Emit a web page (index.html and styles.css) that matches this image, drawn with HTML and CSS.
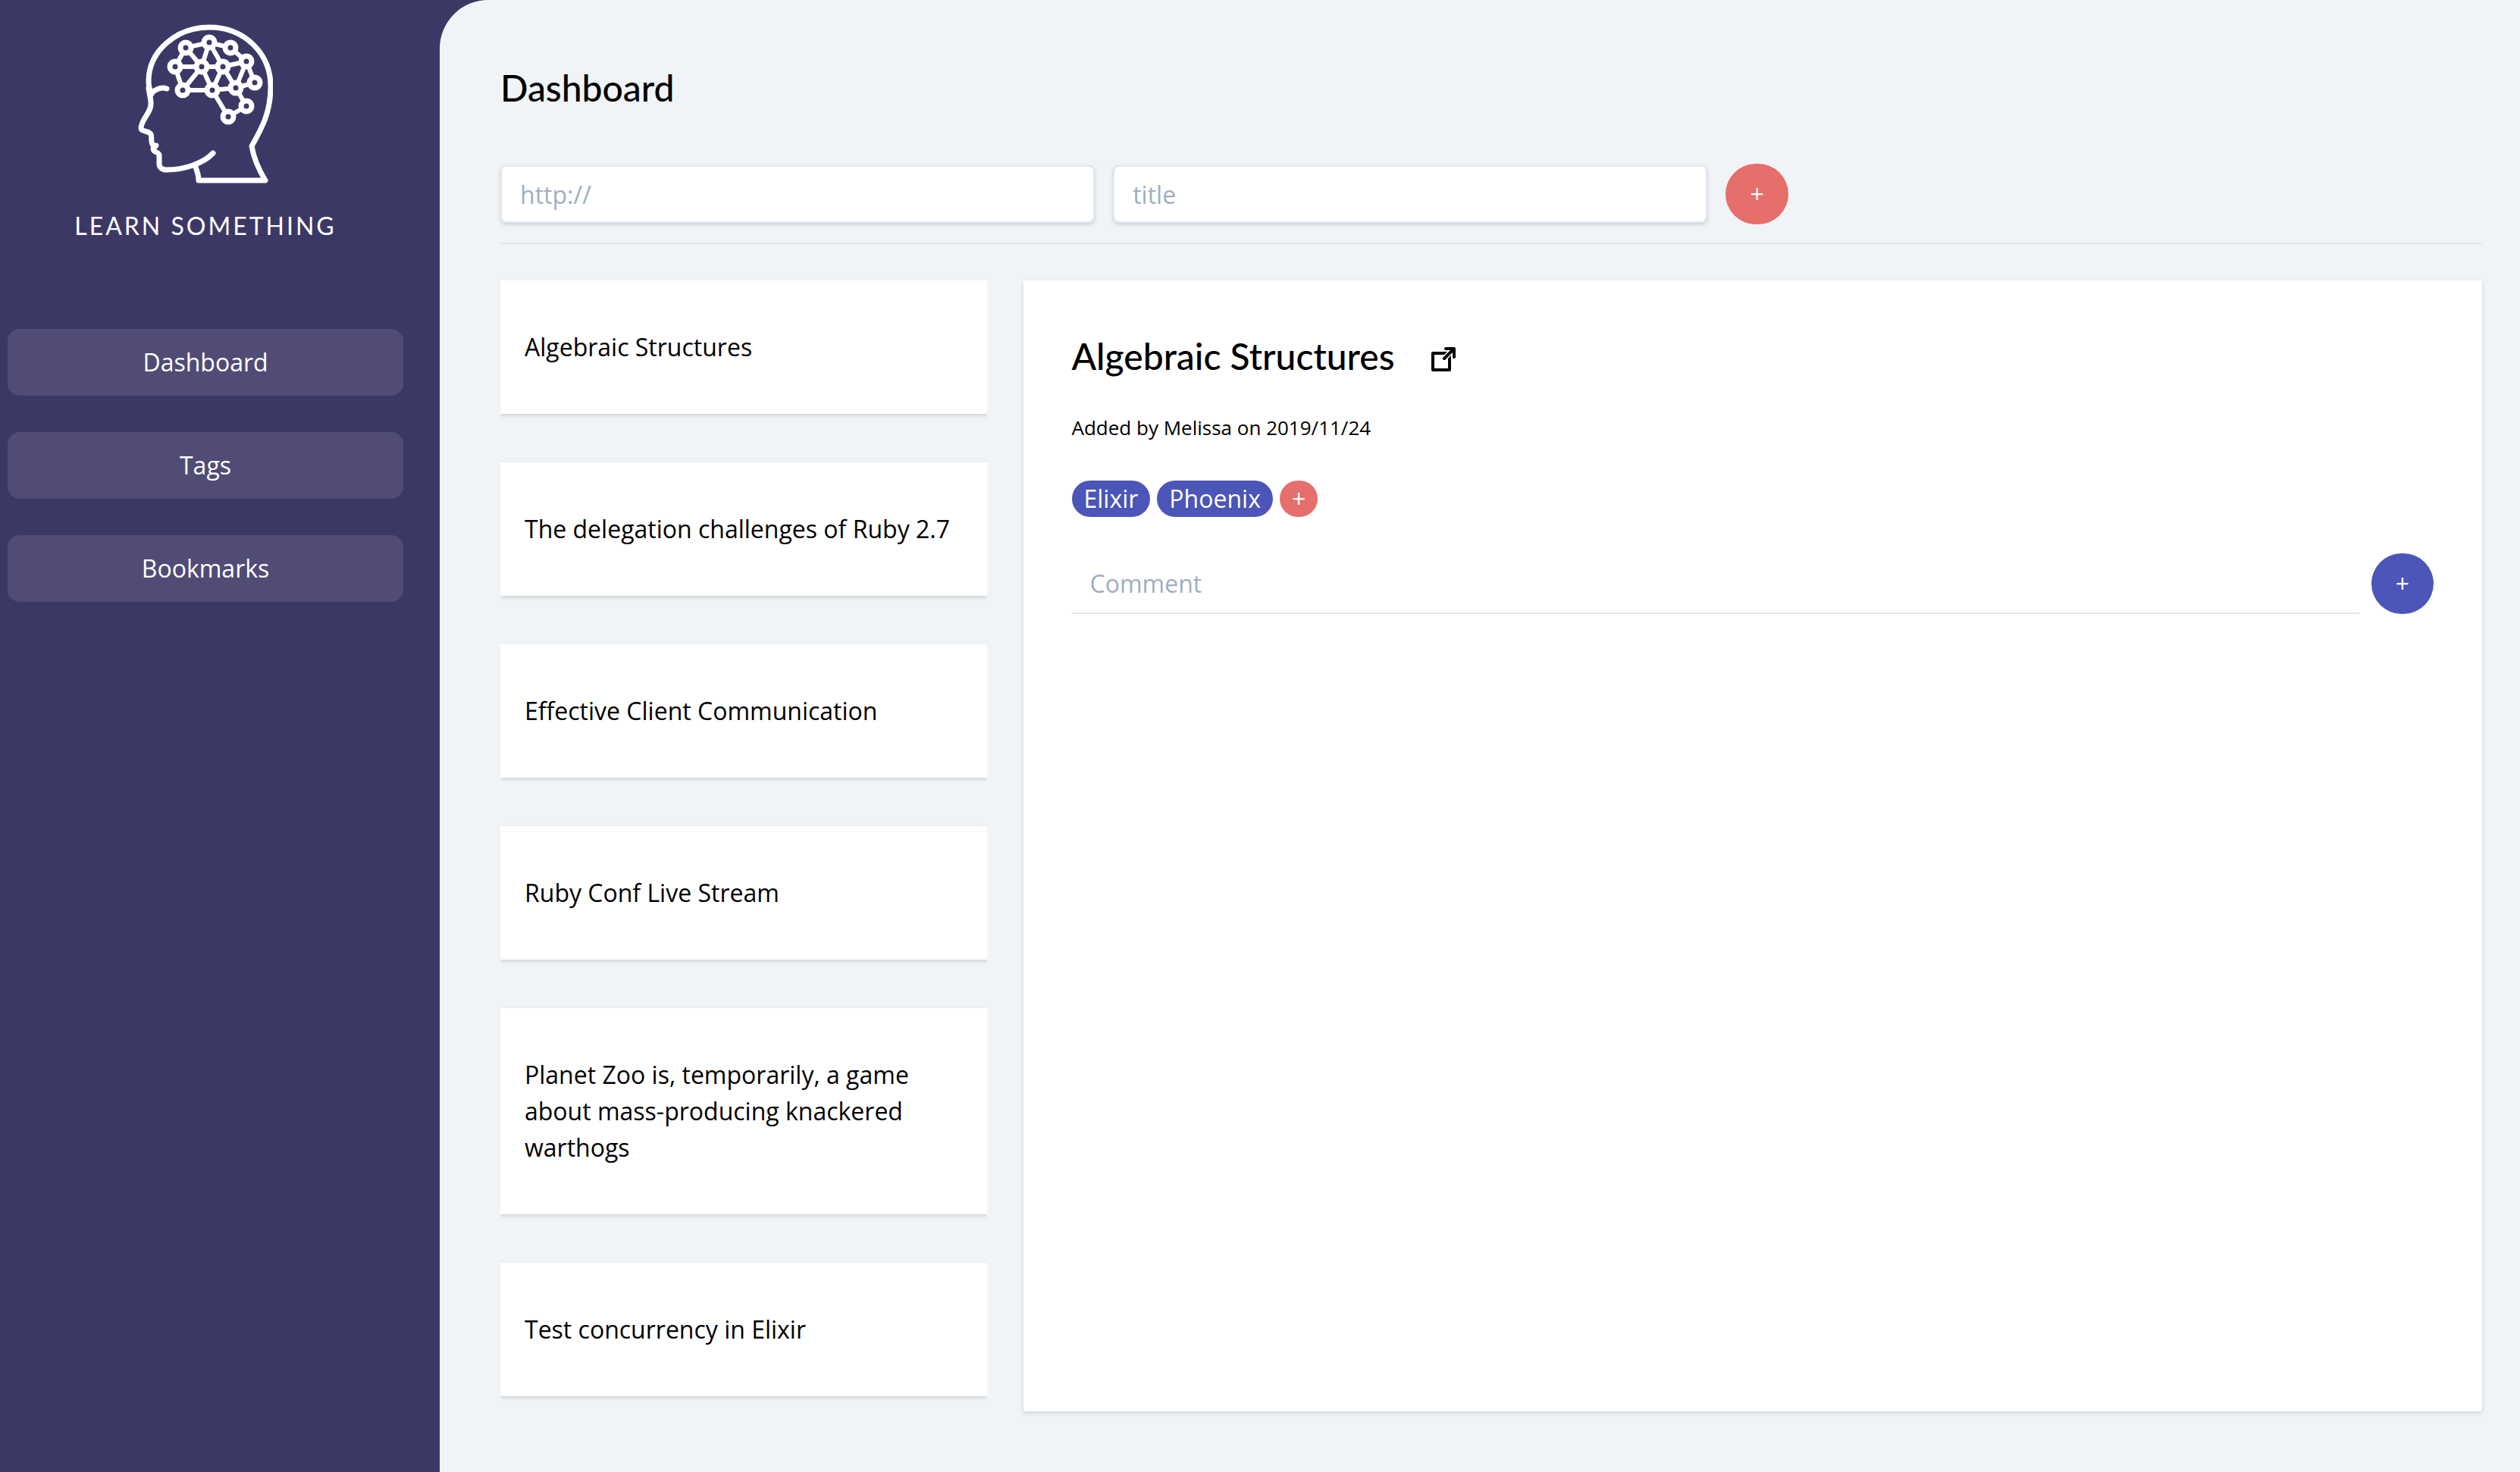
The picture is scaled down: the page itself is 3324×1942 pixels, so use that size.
FILE: index.html
```html
<!DOCTYPE html>
<html lang="en">
<head>
<meta charset="utf-8">
<title>Learn Something</title>
<link rel="stylesheet" href="styles.css">
</head>
<body>
<div class="app">
  <aside class="sidebar">
    <svg class="logo" viewBox="0 0 178 210" fill="none" stroke="#fff" stroke-width="7" stroke-linejoin="round" stroke-linecap="round" aria-hidden="true">
      <path d="M18 92C15 86 14 81 14 75C14 36 50 4 94 4C141 4 175 39 175 82C175 116 164 136 150 161C153 178 160 193 168 206H80C80 200 78 193 75 186"/>
      <path d="M14 84C15 92 17 98 17 104C18 116 4 126 4 137C4 142 14 140 17 145C19 149 16 156 20 160H24L20 164C20 170 29 168 28 174V184C28 189 32 192 38 192C60 192 86 184 99 170"/>
      <path d="M16 92C23 86 30 82 38 85"/>
      <g stroke-width="6">
        <path d="M63 31L94 24L122 31L143 49L154 77L129 84L112 56L94 24L84 56L63 31L49 56L59 87H98L129 84L143 108L119 122L98 87L112 56L143 49L129 84M49 56H112M84 56L59 87M84 56L98 87"/>
      </g>
      <g fill="#3c3866">
        <circle cx="63" cy="31" r="7"/><circle cx="94" cy="24" r="7"/><circle cx="122" cy="31" r="7"/>
        <circle cx="143" cy="49" r="7"/><circle cx="154" cy="77" r="7"/><circle cx="129" cy="84" r="7"/>
        <circle cx="49" cy="56" r="7"/><circle cx="84" cy="56" r="7"/><circle cx="112" cy="56" r="7"/>
        <circle cx="59" cy="87" r="7"/><circle cx="98" cy="87" r="7"/><circle cx="143" cy="108" r="7"/><circle cx="119" cy="122" r="7"/>
      </g>
    </svg>
    <p class="brand">LEARN SOMETHING</p>
    <nav class="nav">
      <a class="nav-link" href="#dashboard">Dashboard</a>
      <a class="nav-link" href="#tags">Tags</a>
      <a class="nav-link" href="#bookmarks">Bookmarks</a>
    </nav>
  </aside>
  <main class="main">
    <h1 class="heading">Dashboard</h1>
    <form class="add-form">
      <input class="field" type="text" placeholder="http://" aria-label="URL">
      <input class="field" type="text" placeholder="title" aria-label="Title">
      <button class="round-button accent" type="button" aria-label="Add bookmark">+</button>
    </form>
    <div class="content">
      <div class="list">
        <a class="card" href="#1">Algebraic Structures</a>
        <a class="card" href="#2">The delegation challenges of Ruby 2.7</a>
        <a class="card" href="#3">Effective Client Communication</a>
        <a class="card" href="#4">Ruby Conf Live Stream</a>
        <a class="card" href="#5">Planet Zoo is, temporarily, a game about mass-producing knackered warthogs</a>
        <a class="card" href="#6">Test concurrency in Elixir</a>
      </div>
      <section class="panel">
        <div class="panel-title">
          <h2 class="heading">Algebraic Structures</h2>
          <a class="open-link" href="#open" aria-label="Open link">
            <svg viewBox="0 0 32 32" width="32" height="32" fill="none" stroke="#000" stroke-width="4" stroke-linejoin="round" aria-hidden="true">
              <path d="M2 8H24V30H2Z"/>
              <path d="M30 2L14 18" stroke="#fff" stroke-width="7"/>
              <path d="M19 2H30V13M30 2L17 15" stroke-linecap="round"/>
              <path d="M24 2H30V8Z" fill="#000" stroke="none"/>
            </svg>
          </a>
        </div>
        <p class="meta">Added by Melissa on 2019/11/24</p>
        <div class="tags">
          <span class="tag">Elixir</span>
          <span class="tag">Phoenix</span>
          <button class="tag accent" type="button" aria-label="Add tag">+</button>
        </div>
        <form class="comment-form">
          <input class="comment" type="text" placeholder="Comment" aria-label="Comment">
          <button class="round-button" type="button" aria-label="Add comment">+</button>
        </form>
      </section>
    </div>
  </main>
</div>
</body>
</html>
```
FILE: styles.css
```css
* { box-sizing: border-box; margin: 0; }

body {
  font: 32px/48px "Open Sans", sans-serif;
  color: #000;
  background: #3c3866;
}

a { color: inherit; text-decoration: none; }

button, input { font: inherit; }

.app { display: flex; min-height: 100vh; }

.sidebar {
  flex: none;
  width: 580px;
  padding: 32px 48px 32px 10px;
  display: flex;
  flex-direction: column;
  align-items: center;
  color: #fff;
}

.logo { width: 178px; height: 210px; }

.brand {
  margin-top: 32px;
  font-family: Lato, sans-serif;
  letter-spacing: 3px;
}

.nav {
  align-self: stretch;
  margin-top: 112px;
  display: grid;
  gap: 48px;
}

.nav-link {
  padding: 20px;
  border-radius: 16px;
  background: #504c75;
  text-align: center;
}

.main {
  flex: 1;
  min-width: 0;
  padding: 80px 50px 80px 80px;
  display: flex;
  flex-direction: column;
  border-top-left-radius: 64px;
  background: #f0f4f7;
}

.heading {
  font: 500 48px/72px Lato, sans-serif;
}

.add-form {
  margin-top: 64px;
  padding-bottom: 24px;
  border-bottom: 2px solid #e2e8f0;
  display: flex;
  align-items: center;
  gap: 24px;
}

.field {
  flex: 0 0 30%;
  padding: 12px 24px;
  border: 2px solid #e2e8f0;
  border-radius: 8px;
  background: #fff;
  box-shadow: 0 2px 6px rgba(0, 0, 0, .1), 0 2px 4px rgba(0, 0, 0, .06);
}

.field, .comment { height: 76px; min-width: 0; }

::placeholder { color: #a0aec0; opacity: 1; }

.round-button {
  flex: none;
  padding: 16px 32px;
  border: 0;
  border-radius: 41px;
  background: #4c55b8;
  color: #fff;
}

.content {
  flex: 1;
  margin-top: 48px;
  display: grid;
  grid-template-columns: minmax(0, 1fr) minmax(0, 3fr);
  gap: 48px;
}

.list {
  display: flex;
  flex-direction: column;
  gap: 64px;
  overflow: hidden;
}

.card {
  padding: 64px 32px;
}

.card, .panel {
  background: #fff;
  box-shadow: 0 2px 6px rgba(0, 0, 0, .1), 0 2px 4px rgba(0, 0, 0, .06);
}

.panel { padding: 64px; }

.panel-title {
  display: flex;
  align-items: center;
  gap: 48px;
}

.open-link { display: flex; padding-top: 8px; }

.meta {
  margin-top: 40px;
  font-size: 26px;
  line-height: 36px;
}

.tags {
  margin-top: 52px;
  display: flex;
  gap: 9px;
}

.tag {
  padding: 0 16px;
  border: 0;
  border-radius: 24px;
  background: #4c55b8;
  color: #fff;
}

.round-button.accent, .tag.accent { background: #e66e6b; }

.comment-form {
  margin-top: 48px;
  display: flex;
  gap: 16px;
}

.comment {
  flex: 1;
  height: 80px;
  padding: 0 24px;
  border: 0;
  border-bottom: 2px solid #e2e8f0;
  background: none;
}
```
